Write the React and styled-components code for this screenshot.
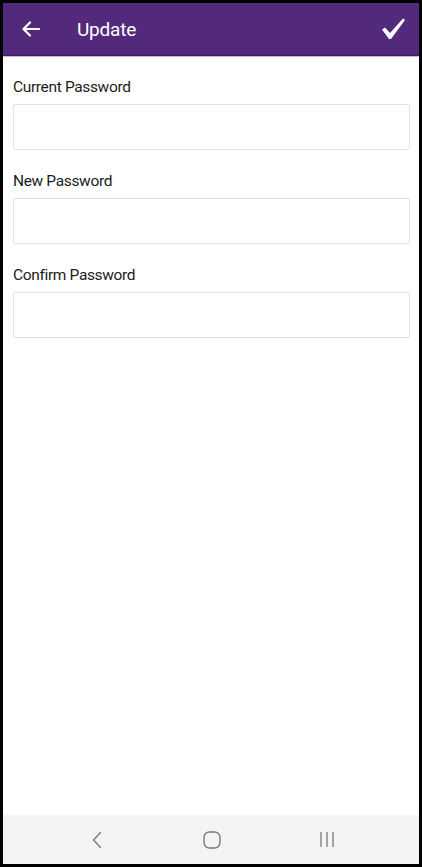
import React from "react";
import styled, { createGlobalStyle } from "styled-components";

const Global = createGlobalStyle`
  html, body { margin: 0; padding: 0; background: #000; }
  * { box-sizing: border-box; }
`;

const Frame = styled.div`
  width: 422px;
  height: 867px;
  border: solid #000;
  border-width: 3px 3px 3px 3px;
  background: #fff;
  display: flex;
  flex-direction: column;
  font-family: Roboto, "Liberation Sans", sans-serif;
`;

const Header = styled.header`
  height: 53px;
  flex: none;
  background: #532a7b;
  border-bottom: 1px solid #3e1d5c;
  box-shadow: 0 1px 0 #cdb8dd;
  display: flex;
  align-items: center;
  padding: 0 13px 0 18px;
  color: #fff;
`;

const IconButton = styled.button`
  border: 0;
  background: none;
  padding: 0;
  width: ${(p) => p.$w || 20}px;
  height: 22px;
  display: flex;
  align-items: center;
  justify-content: center;
  color: #fff;
`;

const Title = styled.h1`
  margin: 0 0 0 36px;
  flex: 1;
  font-size: 19px;
  font-weight: 400;
  letter-spacing: -0.2px;
`;

const Form = styled.main`
  flex: 1;
  padding: 22px 9px 0 10px;
  display: flex;
  flex-direction: column;
  gap: 22px;
`;

const Field = styled.div`
  display: flex;
  flex-direction: column;
  gap: 8px;
`;

const Label = styled.label`
  font-size: 15.5px;
  font-weight: 400;
  color: #1c1c1c;
  letter-spacing: -0.35px;
  line-height: 18px;
`;

const Input = styled.input`
  height: 46px;
  width: 100%;
  border: 1px solid #e3e3e3;
  border-radius: 2px;
  background: #fff;
  outline: none;
  font-size: 16px;
  padding: 0 10px;
`;

const NavBar = styled.nav`
  height: 49px;
  flex: none;
  background: #f4f4f4;
  display: grid;
  grid-template-columns: 1fr 1fr 1fr;
  align-items: center;
  justify-items: center;
  padding: 0 34px 0 36px;
  color: #7a7a7a;
`;

const fields = ["Current Password", "New Password", "Confirm Password"];

export default function App() {
  return (
    <>
      <Global />
      <Frame>
        <Header>
          <IconButton aria-label="back">
            <svg width="18" height="16" viewBox="0 0 18 16" fill="none" stroke="#fff" strokeWidth="2.2" strokeLinecap="round" strokeLinejoin="round">
              <path d="M17 8H2M8 1.5 1.5 8 8 14.5" />
            </svg>
          </IconButton>
          <Title>Update</Title>
          <IconButton aria-label="save" $w={25}>
            <svg width="25" height="22" viewBox="0 0 25 22" fill="#fff">
              <path d="M1 11.5 4 9.5 9 15 22 0.5 24 2 10 21 8 21Z" />
            </svg>
          </IconButton>
        </Header>
        <Form>
          {fields.map((f) => (
            <Field key={f}>
              <Label>{f}</Label>
              <Input type="password" />
            </Field>
          ))}
        </Form>
        <NavBar>
          <svg width="12" height="18" viewBox="0 0 12 18" fill="none" stroke="#7a7a7a" strokeWidth="1.4" strokeLinecap="round" strokeLinejoin="round">
            <path d="M9.5 1.5 2.5 9l7 7.5" />
          </svg>
          <svg width="18" height="18" viewBox="0 0 18 18" fill="none" stroke="#7a7a7a" strokeWidth="1.4">
            <rect x="1" y="1" width="16" height="16" rx="5.5" />
          </svg>
          <svg width="16" height="17" viewBox="0 0 16 17" fill="none" stroke="#7a7a7a" strokeWidth="1.3">
            <path d="M2 1v15M8 1v15M14 1v15" />
          </svg>
        </NavBar>
      </Frame>
    </>
  );
}
